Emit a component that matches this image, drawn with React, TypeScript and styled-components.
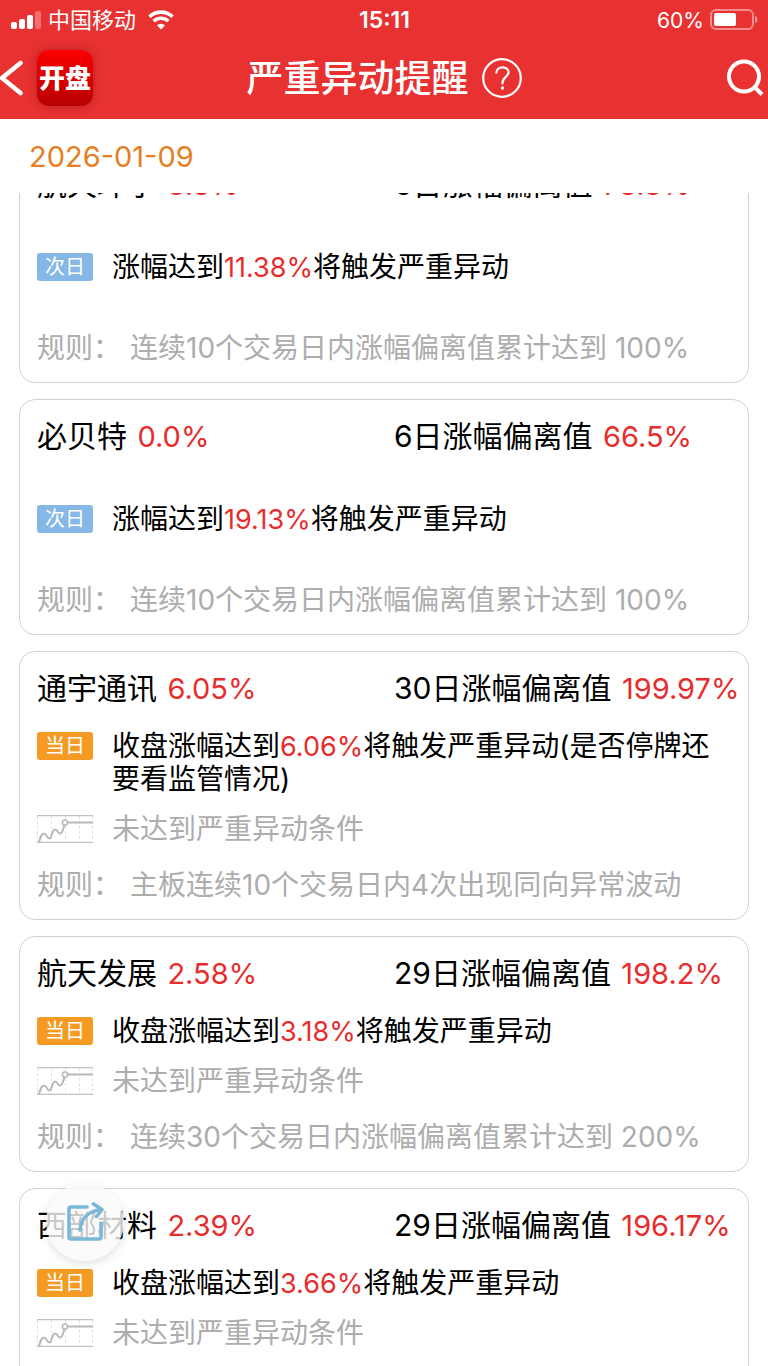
import React, { useLayoutEffect, useRef } from 'react';
import styled, { createGlobalStyle } from 'styled-components';

const Global = createGlobalStyle`
  *, *::before, *::after { box-sizing: border-box; }
  body {
    margin: 0;
    background: #fff;
    color: #000;
    font-family: Inter, "Noto Sans CJK SC", sans-serif;
    font-size: 28px;
    line-height: 33px;
  }
  h1, h2, p { margin: 0; font-weight: 400; }
  button { border: 0; padding: 0; background: none; font: inherit; color: inherit; cursor: pointer; }
`;

const Screen = styled.div`
  display: flex;
  flex-direction: column;
  height: 100vh;
`;

const TopBar = styled.header`
  background: #e83131;
  color: #fff;
`;

const StatusBar = styled.div`
  display: grid;
  grid-template-columns: 1fr auto 1fr;
  align-items: center;
  height: 40px;
  padding: 0 10px 0 11px;
  font-size: 22px;
`;

const StatusGroup = styled.div<{ $end?: boolean }>`
  display: flex;
  align-items: center;
  gap: ${p => (p.$end ? 6 : 7)}px;
  justify-content: ${p => (p.$end ? 'flex-end' : 'flex-start')};
`;

const Battery = styled.span`
  font-size: 21px;
`;

const Clock = styled.time`
  font-size: 23px;
  font-weight: 600;
`;

const NavBar = styled.nav`
  display: grid;
  grid-template-columns: 1fr auto 1fr;
  align-items: center;
  height: 79px;
  padding-bottom: 4px;
`;

const NavSide = styled.div<{ $end?: boolean }>`
  display: flex;
  align-items: center;
  gap: 14px;
  padding-right: ${p => (p.$end ? 4 : 0)}px;
  justify-content: ${p => (p.$end ? 'flex-end' : 'flex-start')};
`;

const IconButton = styled.button`
  display: flex;
`;

const AppLogo = styled.button`
  width: 56px;
  height: 56px;
  padding-top: 2px;
  border-radius: 12px;
  background: linear-gradient(#fb0000, #b80000);
  box-shadow: 0 0 8px rgba(90, 0, 0, 0.35);
  font-size: 26px;
  font-weight: 900;
`;

const TitleGroup = styled.div`
  display: flex;
  align-items: center;
  gap: 13px;
`;

const Title = styled.h1`
  padding-top: 2px;
  font-size: 37px;
  line-height: 48px;
  font-weight: 500;
`;

const DateBar = styled.div`
  flex: none;
  height: 74px;
  padding: 0 29px;
  color: #e67e22;
  font-size: 29px;
  line-height: 76px;
`;

const List = styled.main`
  flex: 1;
  min-height: 0;
  overflow-y: auto;
  scrollbar-width: none;
  padding: 0 19px;
`;

const Cards = styled.div`
  display: flex;
  flex-direction: column;
  gap: 16px;
  padding-bottom: 16px;
`;

const Card = styled.article`
  border: 1px solid #d2d2d2;
  border-radius: 16px;
  padding: 15px 12px 17px 17px;
`;

const CardHead = styled.div`
  display: grid;
  grid-template-columns: 357px 1fr;
  font-size: 30px;
  line-height: 42px;
  white-space: nowrap;
`;

const StockName = styled.h2`
  font-size: 30px;
`;

const Value = styled.span`
  color: #e82c2c;
  font-size: 27px;
  line-height: 1;
`;

const HeadValue = styled(Value)`
  margin-left: 2px;
  font-size: 29px;
`;

const Alerts = styled.div`
  display: flex;
  flex-direction: column;
  justify-content: center;
  gap: 17px;
  min-height: 83px;
  margin: 21px 0 23px;
`;

const AlertRow = styled.div<{ $muted?: boolean }>`
  display: flex;
  align-items: flex-start;
  gap: 19px;
  color: ${p => (p.$muted ? '#adadad' : '#000')};
`;

const Tag = styled.span<{ $next?: boolean }>`
  flex: none;
  width: 56px;
  height: 28px;
  margin-top: 2px;
  border-radius: 3px;
  background: ${p => (p.$next ? '#85b8e6' : '#f59a23')};
  color: #fff;
  font-size: 20px;
  line-height: 28px;
  text-align: center;
`;

const Rule = styled.p`
  display: flex;
  gap: 9px;
  color: #adadad;
  white-space: nowrap;
`;

const ShareButton = styled.button`
  position: fixed;
  left: 46px;
  bottom: 105px;
  width: 78px;
  height: 78px;
  border-radius: 50%;
  background: rgba(250, 250, 250, 0.8);
  box-shadow: 0 3px 10px rgba(0, 0, 0, 0.12);
  display: flex;
  align-items: center;
  justify-content: center;
`;

const TrendIcon = styled.svg`
  flex: none;
  margin-top: 2px;
`;

const Trend = () => (
  <TrendIcon width="56" height="28" viewBox="0 0 56 28" fill="none" aria-hidden="true">
    <path d="M.5 1v26M14.500 1v26M28.500 1v26M42.500 1v26M55.500 1v26" stroke="#e2e2e2" strokeDasharray="3 2" />
    <path d="M0 .5h56M0 27.500h56" stroke="#c2c2c2" strokeWidth="1.400" />
    <path d="M2 27C3.500 22 4.500 18.500 7 18.500S10 23.500 12.500 23.500S15 14.500 18 14.500S20.500 18.500 23 18.500S26.500 13 27.500 9.500" stroke="#b8b8b8" strokeWidth="2" />
    <path d="M31 7.500h25" stroke="#b8b8b8" strokeWidth="2" />
    <circle cx="28" cy="7.500" r="2.600" fill="#fff" stroke="#b8b8b8" strokeWidth="1.500" />
  </TrendIcon>
);

type Stock = {
  name: string;
  change: string;
  days: number;
  deviation: string;
  next?: boolean;
  trigger: string;
  note?: string;
  rule: string;
};

const stocks: Stock[] = [
  { name: '航天环宇', change: '8.8%', days: 6, deviation: '78.8%', next: true, trigger: '11.38%', rule: '连续10个交易日内涨幅偏离值累计达到 100%' },
  { name: '必贝特', change: '0.0%', days: 6, deviation: '66.5%', next: true, trigger: '19.13%', rule: '连续10个交易日内涨幅偏离值累计达到 100%' },
  { name: '通宇通讯', change: '6.05%', days: 30, deviation: '199.97%', trigger: '6.06%', note: '(是否停牌还要看监管情况)', rule: '主板连续10个交易日内4次出现同向异常波动' },
  { name: '航天发展', change: '2.58%', days: 29, deviation: '198.2%', trigger: '3.18%', rule: '连续30个交易日内涨幅偏离值累计达到 200%' },
  { name: '西部材料', change: '2.39%', days: 29, deviation: '196.17%', trigger: '3.66%', rule: '连续30个交易日内涨幅偏离值累计达到 200%' },
];

const StockCard = ({ stock }: { stock: Stock }) => (
  <Card>
    <CardHead>
      <StockName>{stock.name} <HeadValue>{stock.change}</HeadValue></StockName>
      <p>{stock.days}日涨幅偏离值 <HeadValue>{stock.deviation}</HeadValue></p>
    </CardHead>
    <Alerts>
      <AlertRow>
        <Tag $next={stock.next}>{stock.next ? '次日' : '当日'}</Tag>
        <p>{stock.next ? '' : '收盘'}涨幅达到<Value>{stock.trigger}</Value>将触发严重异动{stock.note}</p>
      </AlertRow>
      {!stock.next && (
        <AlertRow $muted>
          <Trend />
          <p>未达到严重异动条件</p>
        </AlertRow>
      )}
    </Alerts>
    <Rule><span>规则：</span><span>{stock.rule}</span></Rule>
  </Card>
);

export default function App() {
  const list = useRef<HTMLElement>(null);

  // Open the list slightly scrolled, with the first card's heading under the date bar.
  useLayoutEffect(() => {
    if (list.current) list.current.scrollTop = 46;
  }, []);

  return (
    <Screen>
      <Global />
      <TopBar>
        <StatusBar>
          <StatusGroup>
            <svg width="30" height="20" viewBox="0 0 30 20" fill="#fff" aria-hidden="true">
              <rect x="0" y="12" width="6" height="7" rx="2" />
              <rect x="8" y="9" width="6" height="10" rx="2" />
              <rect x="16" y="5" width="6" height="14" rx="2" />
              <rect x="24" y="1" width="6" height="18" rx="2" opacity=".3" />
            </svg>
            <span>中国移动</span>
            <svg width="36" height="20" viewBox="-5 0 36 20" fill="none" stroke="#fff" strokeWidth="3.600" aria-hidden="true">
              <path d="M1.500 6.800a16.500 16.500 0 0 1 23 0" />
              <path d="M5.700 11.200a10.500 10.500 0 0 1 14.600 0" />
              <path d="M13 19.500l-4-4.200a5.800 5.800 0 0 1 8 0z" fill="#fff" stroke="none" />
            </svg>
          </StatusGroup>
          <Clock>15:11</Clock>
          <StatusGroup $end>
            <Battery>60%</Battery>
            <svg width="48" height="22" viewBox="0 0 48 22" aria-hidden="true">
              <rect x="1" y="1" width="42" height="19" rx="5" fill="none" stroke="#fff" strokeWidth="2" opacity=".45" />
              <rect x="4" y="4" width="22" height="13" rx="2" fill="#fff" />
              <path d="M45 7c3.300 1.200 3.300 6 0 7.200z" fill="#fff" opacity=".45" />
            </svg>
          </StatusGroup>
        </StatusBar>
        <NavBar>
          <NavSide>
            <IconButton aria-label="返回">
              <svg width="23" height="36" viewBox="0 0 23 36" fill="none" stroke="#fff" strokeWidth="4.500" strokeLinecap="round" strokeLinejoin="round">
                <path d="M20.500 3L2 18l18.500 15" />
              </svg>
            </IconButton>
            <AppLogo>开盘</AppLogo>
          </NavSide>
          <TitleGroup>
            <Title>严重异动提醒</Title>
            <IconButton aria-label="帮助">
              <svg width="40" height="40" viewBox="0 0 40 40" fill="none" stroke="#fff" strokeWidth="2.200">
                <circle cx="20" cy="20" r="18.800" />
                <path d="M14.200 15.500c0-8.500 12.800-7.800 12.300-.8c-.3 4-6 4.600-6 10v1.500" />
                <circle cx="20.500" cy="30" r="1.700" fill="#fff" stroke="none" />
              </svg>
            </IconButton>
          </TitleGroup>
          <NavSide $end>
            <IconButton aria-label="搜索">
              <svg width="38" height="38" viewBox="0 0 38 38" fill="none" stroke="#fff" strokeWidth="4">
                <circle cx="18" cy="17.500" r="15" />
                <path d="M28.500 28l7.500 7.500" />
              </svg>
            </IconButton>
          </NavSide>
        </NavBar>
      </TopBar>
      <DateBar><time dateTime="2026-01-09">2026-01-09</time></DateBar>
      <List ref={list}>
        <Cards>
          {stocks.map(s => <StockCard key={s.name} stock={s} />)}
        </Cards>
      </List>
      <ShareButton aria-label="分享">
        <svg width="38" height="40" viewBox="0 0 38 40" fill="none" stroke="#7ab8da" strokeWidth="3.600" strokeLinecap="round" strokeLinejoin="round">
          <path d="M21 5H5a2 2 0 0 0-2 2v28a2 2 0 0 0 2 2h28a2 2 0 0 0 2-2V21" />
          <path d="M14 28C15 17 22 9 35 7.500M27.500 2l8.500 5.500-5.500 7" />
        </svg>
      </ShareButton>
    </Screen>
  );
}
